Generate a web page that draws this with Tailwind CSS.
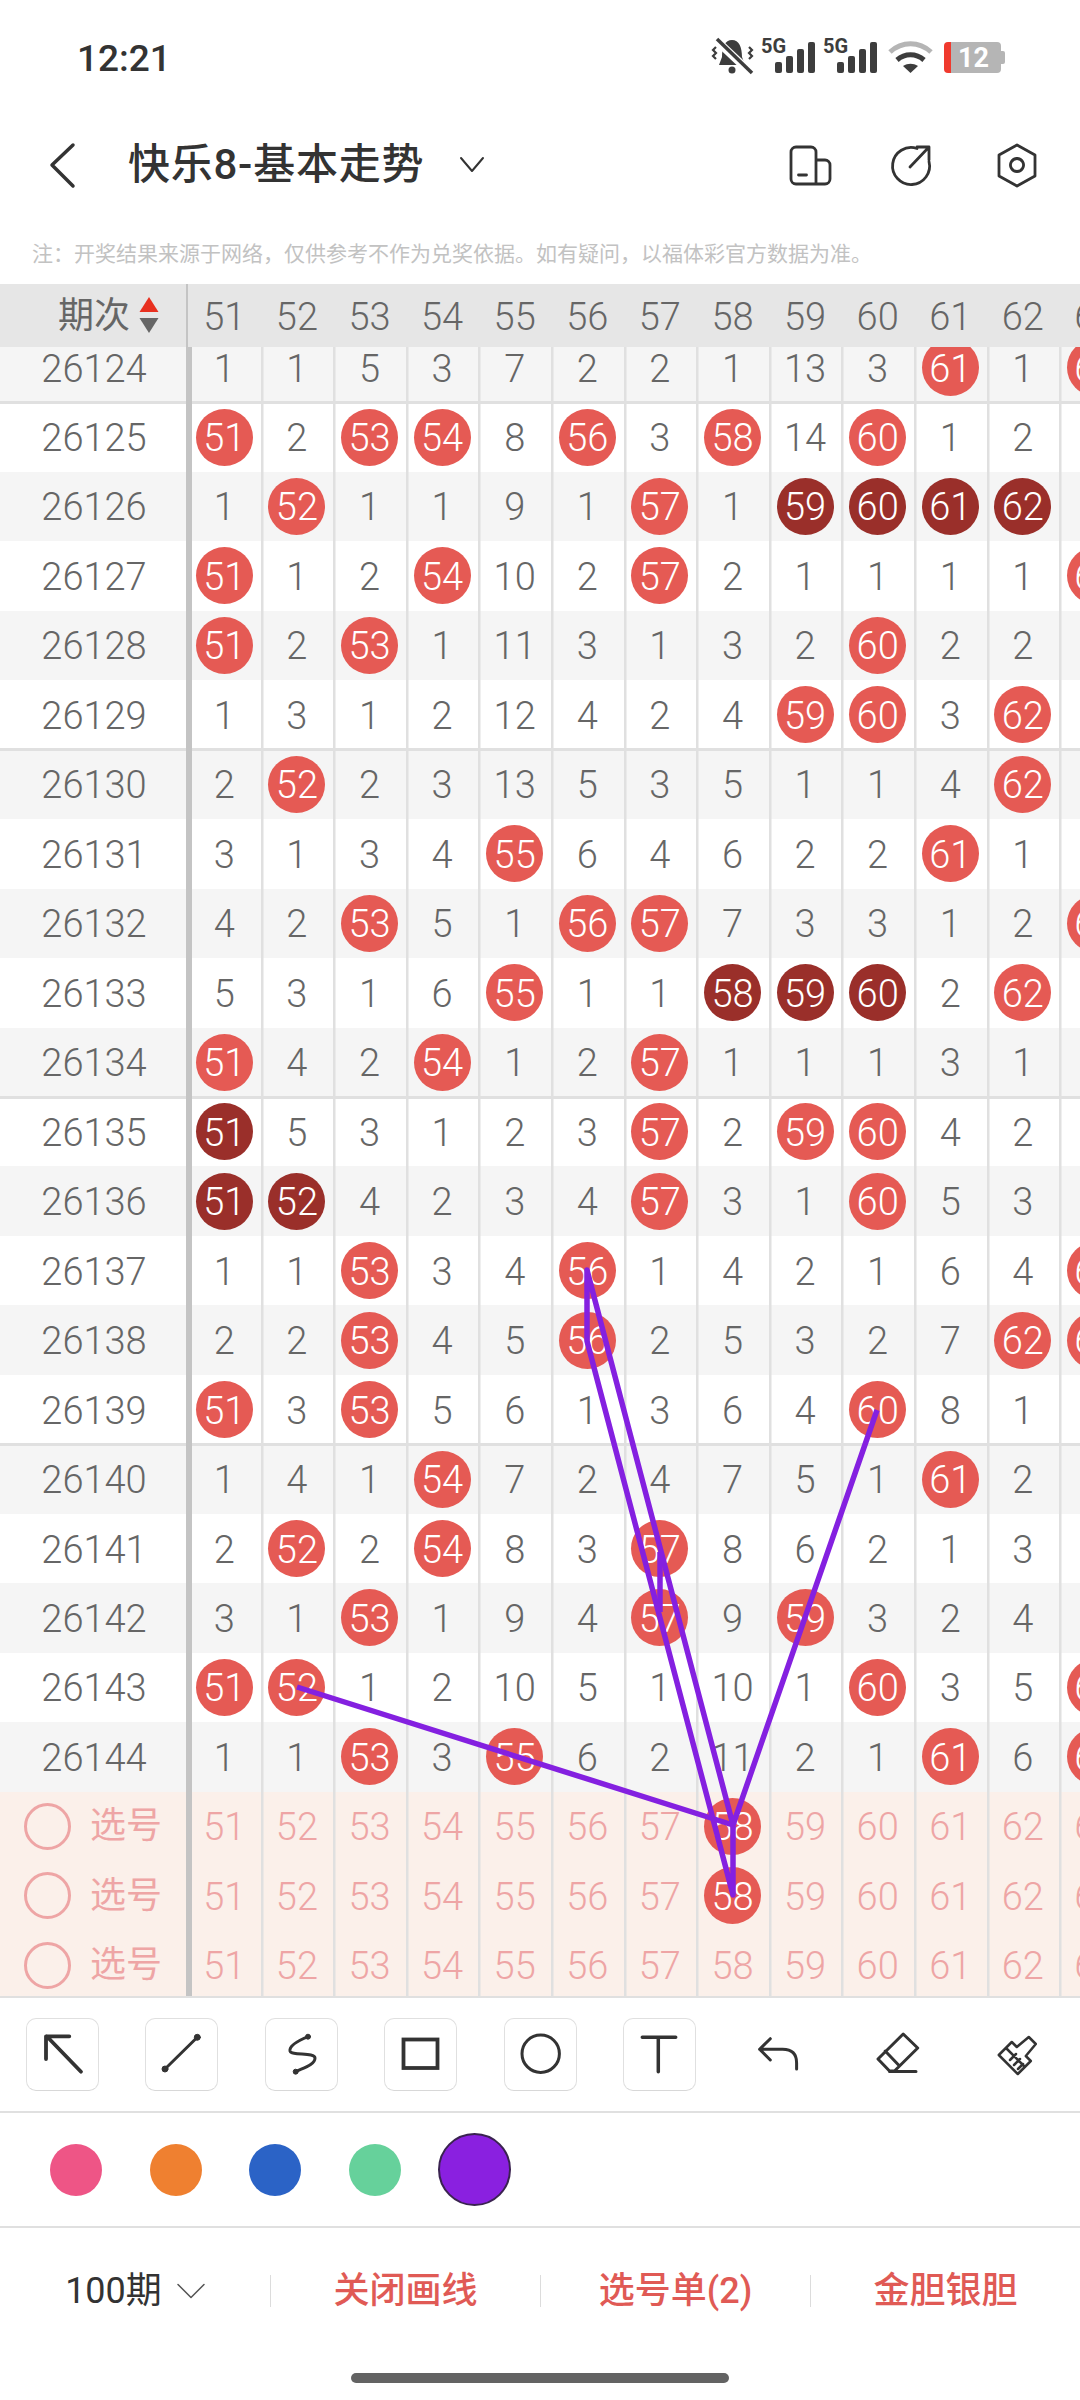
<!DOCTYPE html>
<html lang="zh">
<head>
<meta charset="utf-8">
<script src="https://cdn.jsdelivr.net/npm/@tailwindcss/browser@4"></script>
</head>
<body class="bg-white">
<div class="relative w-[1080px] h-[2400px] overflow-hidden bg-white font-['Roboto','Noto_Sans_CJK_SC',sans-serif] text-[#666]">

  <!-- status bar -->
  <div class="h-[116px] flex items-center justify-between pl-[77px] pr-[70px]">
    <span class="text-[37px] font-medium text-[#333] leading-none">12:21</span>
    <svg class="w-[300px] h-[50px]" viewBox="710 33 300 50" fill="#3d3d3d">
      <path d="M722 57c0-10 3-17 10-17s10 7 10 17l3 8h-26z"/><circle cx="732" cy="70" r="3.500"/>
      <path d="M716 40 752 74" stroke="#fff" stroke-width="8"/><path d="M717 39 752 73" stroke="#3d3d3d" stroke-width="3.500"/>
      <path d="M716 47l-3 3 3 3-3 3 3 3M749 47l3 3-3 3 3 3-3 3" stroke="#3d3d3d" stroke-width="2.200" fill="none"/>
      <text x="761" y="53" font-size="20" font-weight="700" font-family="Roboto">5G</text>
      <rect x="775" y="62" width="7" height="11" rx="2"/><rect x="786" y="56" width="7" height="17" rx="2"/><rect x="797" y="49" width="7" height="24" rx="2"/><rect x="808" y="42" width="7" height="31" rx="2"/>
      <text x="823" y="53" font-size="20" font-weight="700" font-family="Roboto">5G</text>
      <rect x="837" y="62" width="7" height="11" rx="2"/><rect x="848" y="56" width="7" height="17" rx="2"/><rect x="859" y="49" width="7" height="24" rx="2"/><rect x="870" y="42" width="7" height="31" rx="2"/>
      <path d="M890 52c12-11 29-11 41 0" stroke="#b5b5b5" stroke-width="5" fill="none"/>
      <path d="M897 60c8-7 19-7 27 0" stroke="#3d3d3d" stroke-width="5" fill="none"/>
      <path d="M903 66c5-3 10-3 15 0l-7.500 7z"/>
      <path d="M951 42h46a4 4 0 0 1 4 4v23a4 4 0 0 1-4 4h-46z" fill="#b5b5b5"/>
      <path d="M1001 51h2a2 2 0 0 1 2 2v9a2 2 0 0 1-2 2h-2z" fill="#b5b5b5"/>
      <path d="M951 42v31h-3a4 4 0 0 1-4-4v-23a4 4 0 0 1 4-4z" fill="#f03a2e"/>
      <text x="958" y="67" font-size="27" font-weight="700" fill="#fff" font-family="Roboto">12</text>
    </svg>
  </div>

  <!-- nav bar -->
  <div class="h-[98px] flex items-center relative">
    <svg class="absolute left-0 top-0 w-[1080px] h-[98px]" viewBox="0 116 1080 98" fill="none" stroke="#333" stroke-linecap="round" stroke-linejoin="round">
      <path d="M73 145 52 165 73 186" stroke-width="3.500"/>
      <path d="M461 158 472 171 483 158" stroke-width="2"/>
      <path d="M816 160h9a5 5 0 0 1 5 5v14a5 5 0 0 1-5 5h-29a5 5 0 0 1-5-5v-27a5 5 0 0 1 5-5h15a5 5 0 0 1 5 5v32M798.500 175h8" stroke-width="2.800"/>
      <path d="M917 148.500a18.500 18.500 0 1 0 12 13M910 167l19-20M917 147h12v13" stroke-width="2.800"/>
      <path d="M1017 145l18 10v21l-18 10-18-10v-21zM1017 158.500a6.500 6.500 0 1 0 .01 0" stroke-width="2.800"/>
    </svg>
    <span class="ml-[128px] text-[42px] font-medium text-[#333] leading-none tracking-[0.75px]">快乐8-基本走势</span>
  </div>

  <!-- note -->
  <div class="h-[70px] pt-[10px] pl-[32px] flex items-center text-[21px] text-[#c2c2c2] leading-none">注：开奖结果来源于网络，仅供参考不作为兑奖依据。如有疑问，以福体彩官方数据为准。</div>

  <!-- table header -->
  <div id="head" class="h-[63px] flex bg-[#e6e6e6] overflow-hidden">
    <div class="flex-none w-[188px] h-full flex items-center relative shadow-[inset_-2px_0_0_#c4c4c4]">
      <span class="ml-[58px] text-[36px] leading-none text-[#666]">期次</span>
      <svg class="absolute left-[139px] top-[12px] w-[20px] h-[38px]" viewBox="0 0 20 38"><path d="M10 1 19.500 16H.5z" fill="#e8301f"/><path d="M.5 22h19L10 37z" fill="#666"/></svg>
    </div>
  </div>

  <!-- table body -->
  <div id="body" class="h-[1649px] overflow-hidden"></div>
  <div class="h-[2px] bg-[#e0e0e0]"></div>

  <!-- drawing tools -->
  <div class="h-[113px] pl-[26px] flex items-center gap-[46.4px]">
    <div class="flex-none w-[73px] h-[73px] rounded-[10px] border border-[#e0e0e0] border-b-[#d8d8d8]"><svg class="-m-px w-[73px] h-[73px]" viewBox="0 0 73 73" fill="none" stroke="#333" stroke-linecap="round" stroke-linejoin="round"><path d="M55 53.700 20.700 18.300M43.300 18.300H20V41" stroke-width="3.800"/></svg></div>
    <div class="flex-none w-[73px] h-[73px] rounded-[10px] border border-[#e0e0e0] border-b-[#d8d8d8]"><svg class="-m-px w-[73px] h-[73px]" viewBox="0 0 73 73" fill="#333" stroke="#333" stroke-linecap="round"><path d="M20 51 52.300 19.300" stroke-width="3"/><circle cx="20" cy="51" r="3"/><circle cx="52.300" cy="19.300" r="3"/></svg></div>
    <div class="flex-none w-[73px] h-[73px] rounded-[10px] border border-[#e0e0e0] border-b-[#d8d8d8]"><svg class="-m-px w-[73px] h-[73px]" viewBox="0 0 73 73" fill="none" stroke="#333" stroke-linecap="round"><path d="M43 18.700C35 22 24 27 25 33c1 5 25 1 25 7 0 7-12 10-19.300 13.700" stroke-width="3"/><circle cx="43" cy="18.700" r="2.500" fill="#333"/><circle cx="30.700" cy="53.700" r="2.500" fill="#333"/></svg></div>
    <div class="flex-none w-[73px] h-[73px] rounded-[10px] border border-[#e0e0e0] border-b-[#d8d8d8]"><svg class="-m-px w-[73px] h-[73px]" viewBox="0 0 73 73" fill="none" stroke="#333"><rect x="19.500" y="21.500" width="34" height="28.500" stroke-width="3.800"/></svg></div>
    <div class="flex-none w-[73px] h-[73px] rounded-[10px] border border-[#e0e0e0] border-b-[#d8d8d8]"><svg class="-m-px w-[73px] h-[73px]" viewBox="0 0 73 73" fill="none" stroke="#333"><circle cx="36.700" cy="35.700" r="18.700" stroke-width="3"/></svg></div>
    <div class="flex-none w-[73px] h-[73px] rounded-[10px] border border-[#e0e0e0] border-b-[#d8d8d8]"><svg class="-m-px w-[73px] h-[73px]" viewBox="0 0 73 73" fill="none" stroke="#333" stroke-linecap="round"><path d="M19.300 19.300H52.700M35.300 19.300V53.700" stroke-width="3.500"/></svg></div>
    <div class="flex-none w-[73px] h-[73px]"><svg class="w-[73px] h-[73px]" viewBox="0 0 73 73" fill="none" stroke="#333" stroke-width="3" stroke-linecap="round" stroke-linejoin="round"><path d="M28.300 20.700 17.600 31.300 28.300 42M17.600 31.300H40.600Q54.600 31.300 54.600 45V51"/></svg></div>
    <div class="flex-none w-[73px] h-[73px]"><svg class="w-[73px] h-[73px]" viewBox="0 0 73 73" fill="none" stroke="#333" stroke-width="3" stroke-linecap="round" stroke-linejoin="round"><path d="M41.200 16 55.700 30 32.500 53H27.500L16 41ZM23.200 33 37.500 48M27.500 53.500H54"/></svg></div>
    <div class="flex-none w-[73px] h-[73px]"><svg class="w-[73px] h-[73px]" viewBox="0 0 73 73" fill="none" stroke="#333" stroke-width="2.500" stroke-linecap="round" stroke-linejoin="round"><path d="M17.800 37 30.800 24 35.800 29 47.800 19 54.800 26 44.800 38 49.800 43 36.800 56ZM25 30 43 48M29 42l6-6M33 47l6-6M37 51l5-5"/></svg></div>
  </div>
  <div class="h-[2px] bg-[#e0e0e0]"></div>

  <!-- colours -->
  <div class="h-[113px] flex items-center">
    <div class="ml-[50px] flex-none w-[52px] h-[52px] rounded-full bg-[#ee5586]"></div>
    <div class="ml-[48px] flex-none w-[52px] h-[52px] rounded-full bg-[#ef8030]"></div>
    <div class="ml-[47px] flex-none w-[52px] h-[52px] rounded-full bg-[#2b63c6]"></div>
    <div class="ml-[48px] flex-none w-[52px] h-[52px] rounded-full bg-[#66d19b]"></div>
    <div class="ml-[37px] flex-none w-[73px] h-[73px] rounded-full bg-[#8a20e0] border-2 border-[#3a2350]"></div>
  </div>
  <div class="h-[2px] bg-[#e0e0e0]"></div>

  <!-- footer -->
  <div class="h-[126px] grid grid-cols-4 items-center text-[36px] leading-none text-[#e05a55]">
    <div class="h-[32px] flex items-center justify-center gap-[15px] text-[#333]"><span>100期</span><svg class="w-[28px] h-[16px]" viewBox="0 0 28 16" fill="none" stroke="#555" stroke-width="1.500" stroke-linecap="round" stroke-linejoin="round"><path d="M1 1.500 14 14.500 27 1.500"/></svg></div>
    <div class="h-[32px] flex items-center justify-center border-l border-[#dcdcdc] font-medium">关闭画线</div>
    <div class="h-[32px] flex items-center justify-center border-l border-[#dcdcdc] font-medium">选号单(2)</div>
    <div class="h-[32px] flex items-center justify-center border-l border-[#dcdcdc] font-medium">金胆银胆</div>
  </div>
  <div class="mt-[19px] mx-auto w-[378px] h-[10px] rounded-[5px] bg-[#636363]"></div>

  <!-- hand-drawn lines over the table -->
  <svg class="absolute left-0 top-0 w-[1080px] h-[2400px] pointer-events-none" viewBox="0 0 1080 2400" fill="none" stroke="#8420e0" stroke-width="5.500" stroke-linejoin="round">
    <path d="M297 1687 733 1825 733 1895 587 1341 587 1270 733 1825 877 1410"/>
    <path d="M660 1552V1612"/>
  </svg>
</div>

<script>
const rows = {
26124:"1 1 5 3 7 2 2 1 13 3 r 1 r",
26125:"r 2 r r 8 r 3 r 14 r 1 2 1",
26126:"1 r 1 1 9 1 r 1 d d d d 2",
26127:"r 1 2 r 10 2 r 2 1 1 1 1 r",
26128:"r 2 r 1 11 3 1 3 2 r 2 2 1",
26129:"1 3 1 2 12 4 2 4 r r 3 r 2",
26130:"2 r 2 3 13 5 3 5 1 1 4 r 3",
26131:"3 1 3 4 r 6 4 6 2 2 r 1 4",
26132:"4 2 r 5 1 r r 7 3 3 1 2 r",
26133:"5 3 1 6 r 1 1 d d d 2 r 1",
26134:"r 4 2 r 1 2 r 1 1 1 3 1 2",
26135:"d 5 3 1 2 3 r 2 r r 4 2 3",
26136:"d d 4 2 3 4 r 3 1 r 5 3 4",
26137:"1 1 r 3 4 r 1 4 2 1 6 4 r",
26138:"2 2 r 4 5 r 2 5 3 2 7 r r",
26139:"r 3 r 5 6 1 3 6 4 r 8 1 1",
26140:"1 4 1 r 7 2 4 7 5 1 r 2 2",
26141:"2 r 2 r 8 3 r 8 6 2 1 3 3",
26142:"3 1 r 1 9 4 r 9 r 3 2 4 4",
26143:"r r 1 2 10 5 1 10 1 r 3 5 r",
26144:"1 1 r 3 r 6 2 11 2 1 r 6 r"
};
const CELL = "flex-none w-[72.6px] h-full pt-[2px] flex items-center justify-center text-[38px] font-light leading-none shadow-[inset_2.5px_0_0_#e0e0e0]";
const CELL_FIRST = "flex-none w-[72.6px] h-full pt-[2px] flex items-center justify-center text-[38px] font-light leading-none shadow-[inset_4px_0_0_#c4c4c4]";
const HEAD = "flex-none w-[72.6px] h-full pt-[3px] flex items-center justify-center text-[38px] font-light leading-none text-[#666]";
const RED = "-mt-[2px] pt-[2px] w-[57px] h-[57px] rounded-full flex items-center justify-center bg-[#e55a54] text-white";
const DARK = "-mt-[2px] pt-[2px] w-[57px] h-[57px] rounded-full flex items-center justify-center bg-[#9a2f2a] text-white";
const ID = "flex-none w-[188px] h-full pt-[2px] flex items-center justify-center text-[38px] font-light leading-none text-[#666] shadow-[inset_-2px_0_0_#c4c4c4]";
const SEL = "flex-none w-[188px] h-full flex items-center text-[36px] leading-none text-[#eea5a5] shadow-[inset_-2px_0_0_#c4c4c4]";
const RING = "ml-[24px] mr-[19px] flex-none w-[47px] h-[47px] rounded-full border-[3px] border-[#eea5a5]";
const ROW = "relative flex h-[69.47px]";
const LINE_A = "absolute left-0 w-[186px] top-[-1.3px] h-[3px] bg-[#e0e0e0]";
const LINE_B = "absolute left-[192px] right-0 top-[-1.3px] h-[3px] bg-[#e0e0e0]";
const GRAY = "bg-[#f5f5f5]", WHITE = "bg-white", PINK = "bg-[#fbf0ea] text-[#eea5a5]";

const head = document.getElementById("head");
for (let i = 0; i < 13; i++) {
  const h = document.createElement("div");
  h.className = HEAD;
  h.textContent = 51 + i;
  head.appendChild(h);
}

const body = document.getElementById("body");
let html = '<div class="mt-[-14.2px]">';
function cell(i, inner) {
  return '<div class="' + (i === 0 ? CELL_FIRST : CELL) + '">' + inner + '</div>';
}
for (const id of Object.keys(rows)) {
  const n = +id;
  html += '<div class="' + ROW + ' ' + (n % 2 ? WHITE : GRAY) + '">';
  if (n % 5 === 0) {
    html += '<div class="' + LINE_A + '"></div><div class="' + LINE_B + '"></div>';
  }
  html += '<div class="' + ID + '">' + id + '</div>';
  rows[id].split(" ").forEach((v, i) => {
    const num = 51 + i;
    if (v === "r") html += cell(i, '<div class="' + RED + '">' + num + '</div>');
    else if (v === "d") html += cell(i, '<div class="' + DARK + '">' + num + '</div>');
    else html += cell(i, v);
  });
  html += '</div>';
}
for (let r = 0; r < 3; r++) {
  html += '<div class="' + ROW + ' ' + PINK + '"><div class="' + SEL + '"><div class="' + RING + '"></div>选号</div>';
  for (let i = 0; i < 13; i++) {
    const num = 51 + i;
    html += cell(i, (num === 58 && r < 2) ? '<div class="' + RED + '">58</div>' : num);
  }
  html += '</div>';
}
html += '</div>';
body.innerHTML = html;
</script>
</body>
</html>
